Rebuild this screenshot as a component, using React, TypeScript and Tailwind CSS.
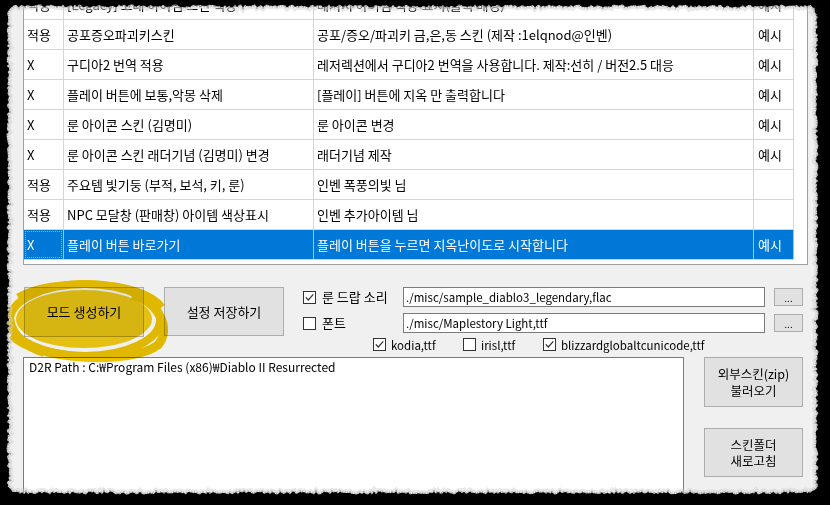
import React from "react";

type Row = { a: string; b: string; c: string; d: string; sel?: boolean };

const rows: Row[] = [
  { a: "적용", b: "[Legacy] 고대 아이템 스킨 색상", c: "레거시 아이템 색상 표시(블록 배경)", d: "예시" },
  { a: "적용", b: "공포증오파괴키스킨", c: "공포/증오/파괴키 금,은,동 스킨 (제작 :1elqnod@인벤)", d: "예시" },
  { a: "X", b: "구디아2 번역 적용", c: "레저렉션에서 구디아2 번역을 사용합니다. 제작:선히 / 버전2.5 대응", d: "예시" },
  { a: "X", b: "플레이 버튼에 보통,악몽 삭제", c: "[플레이] 버튼에 지옥 만 출력합니다", d: "예시" },
  { a: "X", b: "룬 아이콘 스킨 (김명미)", c: "룬 아이콘 변경", d: "예시" },
  { a: "X", b: "룬 아이콘 스킨 래더기념 (김명미) 변경", c: "래더기념 제작", d: "예시" },
  { a: "적용", b: "주요템 빛기둥 (부적, 보석, 키, 룬)", c: "인벤 폭풍의빛 님", d: "" },
  { a: "적용", b: "NPC 모달창 (판매창) 아이템 색상표시", c: "인벤 추가아이템 님", d: "" },
  { a: "X", b: "플레이 버튼 바로가기", c: "플레이 버튼을 누르면 지옥난이도로 시작합니다", d: "예시", sel: true },
];

function tornPath(): string {
  let s = 987654;
  const r = () => {
    s = (s * 16807) % 2147483647;
    return s / 2147483647;
  };
  const L = 8, T = 6, R = 817, B = 493, c = 9;
  const pts: string[] = [];
  const add = (x: number, y: number) => pts.push(`${x.toFixed(1)},${y.toFixed(1)}`);
  const n = () => (r() - 0.5) * 3;
  const arc = (cx: number, cy: number, a0: number, a1: number) => {
    for (let i = 0; i <= 6; i++) {
      const a = a0 + ((a1 - a0) * i) / 6;
      const rr = c + n();
      add(cx + rr * Math.cos(a), cy + rr * Math.sin(a));
    }
  };
  arc(L + c, T + c, Math.PI, 1.5 * Math.PI);
  for (let x = L + c; x <= R - c; x += 2) add(x, T + n());
  arc(R - c, T + c, 1.5 * Math.PI, 2 * Math.PI);
  for (let y = T + c; y <= B - c; y += 2) add(R + n(), y);
  arc(R - c, B - c, 0, 0.5 * Math.PI);
  for (let x = R - c; x >= L + c; x -= 2) add(x, B + n());
  arc(L + c, B - c, 0.5 * Math.PI, Math.PI);
  for (let y = B - c; y >= T + c; y -= 2) add(L + n(), y);
  return "M" + pts.join("L") + "Z";
}

const inner = tornPath();

function Check({ checked }: { checked: boolean }) {
  return (
    <span className="w-[13px] h-[13px] border border-[#333333] bg-white flex items-center justify-center shrink-0">
      {checked && (
        <svg width="11" height="11" viewBox="0 0 11 11">
          <path d="M1.8 5.3 L4.3 8 L9.3 2.3" stroke="#333333" strokeWidth="1.2" fill="none" />
        </svg>
      )}
    </span>
  );
}

function GridRow({ row }: { row: Row }) {
  const bg = row.sel ? "bg-[#0078d7] text-white" : "bg-white text-black";
  const bd = row.sel ? "border-[#9cc3ea]" : "border-[#d5d5d5]";
  return (
    <div className={`flex w-[770px] h-[30px] shrink-0 border-b border-[#d5d5d5] ${bg}`}>
      <div className={`relative w-[40px] border-r ${bd} pl-[3px] flex items-center whitespace-nowrap`}>
        {row.sel && <span className="absolute inset-[1px] border border-dotted border-[#e8a050]" />}
        {row.a}
      </div>
      <div className={`w-[250px] border-r ${bd} pl-[3px] flex items-center whitespace-nowrap overflow-hidden`}>{row.b}</div>
      <div className={`w-[440px] border-r ${bd} pl-[3px] flex items-center whitespace-nowrap overflow-hidden`}>{row.c}</div>
      <div className={`w-[40px] border-r ${bd} pl-[4px] flex items-center whitespace-nowrap`}>{row.d}</div>
    </div>
  );
}

export default function App() {
  return (
    <div className="relative w-[830px] h-[505px] overflow-hidden bg-[#f0f0f0] text-[12px] leading-[16px] text-black font-['Noto_Sans_CJK_KR',sans-serif]">
      <div className="flex flex-col pl-[23px]">
        {/* data grid */}
        <div className="w-[785px] h-[265px] overflow-hidden flex flex-col justify-end bg-white border-x border-b border-[#a0a0a0] text-[13px]">
          {rows.map((r, i) => (
            <GridRow key={i} row={r} />
          ))}
          <div className="h-[4px] shrink-0" />
        </div>

        {/* controls */}
        <div className="h-[92px] flex items-start pt-[22px]">
          <button className="ml-[1px] w-[120px] h-[50px] bg-[#e1e1e1] border border-[#adadad] flex items-center justify-center text-[13px]">
            모드 생성하기
          </button>
          <button className="ml-[20px] w-[120px] h-[49px] bg-[#e1e1e1] border border-[#adadad] flex items-center justify-center text-[13px]">
            설정 저장하기
          </button>
          <div className="ml-[19px] flex flex-col">
            <div className="h-[20px] flex items-center">
              <div className="w-[100px] flex items-center gap-[6px] text-[13px]">
                <Check checked />
                <span>룬 드랍 소리</span>
              </div>
              <div className="w-[362px] h-[20px] bg-white border border-[#7a7a7a] pl-[2px] flex items-center whitespace-nowrap text-[11.5px]">
                ./misc/sample_diablo3_legendary,flac
              </div>
              <button className="ml-[9px] w-[29px] h-[18px] bg-[#e1e1e1] border border-[#adadad] flex items-end justify-center text-[10px] leading-[14px]">
                ...
              </button>
            </div>
            <div className="mt-[6px] h-[20px] flex items-center">
              <div className="w-[100px] flex items-center gap-[6px] text-[13px]">
                <Check checked={false} />
                <span>폰트</span>
              </div>
              <div className="w-[362px] h-[20px] bg-white border border-[#7a7a7a] pl-[2px] flex items-center whitespace-nowrap text-[11.5px]">
                ./misc/Maplestory Light,ttf
              </div>
              <button className="ml-[9px] w-[29px] h-[18px] bg-[#e1e1e1] border border-[#adadad] flex items-end justify-center text-[10px] leading-[14px]">
                ...
              </button>
            </div>
            <div className="mt-[5px] h-[13px] pl-[70px] flex items-center text-[11.5px]">
              <div className="w-[90px] flex items-center gap-[5px]">
                <Check checked />
                <span>kodia,ttf</span>
              </div>
              <div className="w-[80px] flex items-center gap-[5px]">
                <Check checked={false} />
                <span>irisl,ttf</span>
              </div>
              <div className="flex items-center gap-[5px]">
                <Check checked />
                <span>blizzardglobaltcunicode,ttf</span>
              </div>
            </div>
          </div>
        </div>

        {/* log + side buttons */}
        <div className="flex items-start">
          <div className="w-[661px] h-[160px] bg-white border border-[#7a7a7a] pl-[5px] pt-[1px] whitespace-nowrap text-[12px]">
            D2R Path : C:₩Program Files (x86)₩Diablo II Resurrected
          </div>
          <div className="ml-[20px] flex flex-col gap-[21px] text-[12.5px]">
            <button className="w-[99px] h-[50px] bg-[#e1e1e1] border border-[#adadad] flex flex-col items-center justify-center leading-[17px]">
              <span>외부스킨(zip)</span>
              <span>불러오기</span>
            </button>
            <button className="w-[99px] h-[49px] bg-[#e1e1e1] border border-[#adadad] flex flex-col items-center justify-center leading-[16px]">
              <span>스킨폴더</span>
              <span>새로고침</span>
            </button>
          </div>
        </div>
      </div>

      {/* yellow highlighter scribble */}
      <svg
        className="absolute left-0 top-[275px] mix-blend-multiply pointer-events-none"
        width="180"
        height="90"
        viewBox="0 0 180 90"
      >
        <ellipse cx="84" cy="44" rx="68" ry="29" fill="#f2c800" opacity="0.92" />
        <ellipse cx="85" cy="45" rx="75" ry="36" fill="none" stroke="#eec400" strokeWidth="8" />
        <path d="M12,60 C36,86 132,90 158,70 C172,54 158,26 132,20" fill="none" stroke="#eec400" strokeWidth="9" />
        <path d="M18,22 C50,2 142,4 162,32" fill="none" stroke="#eec400" strokeWidth="7" />
        <path d="M10,36 C8,56 24,72 44,78" fill="none" stroke="#eec400" strokeWidth="8" />
      </svg>

      {/* torn paper edge */}
      <svg className="absolute inset-0 pointer-events-none" width="830" height="505" viewBox="0 0 830 505">
        <path d={inner} fill="none" stroke="#cfcfcf" strokeWidth="7" opacity="0.5" />
        <path d={inner} fill="none" stroke="#8a8a8a" strokeWidth="3" strokeDasharray="1 1.5" opacity="0.7" />
        <path d={"M0,0H830V505H0Z " + inner} fill="#000000" fillRule="evenodd" />
      </svg>
    </div>
  );
}
